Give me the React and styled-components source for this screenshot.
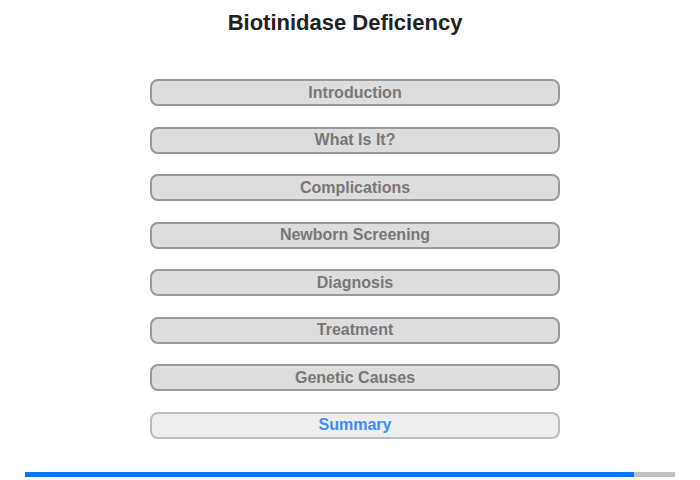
import React from 'react';
import styled, { createGlobalStyle } from 'styled-components';

const GlobalStyle = createGlobalStyle`
  html, body {
    margin: 0;
    padding: 0;
    background: #fff;
    font-family: "Liberation Sans", Arial, sans-serif;
  }
`;

const Page = styled.div`
  width: 700px;
  height: 480px;
  display: flex;
  flex-direction: column;
  align-items: center;
  box-sizing: border-box;
  padding-top: 10px;
`;

const Title = styled.h1`
  margin: 0 10px 0 0;
  font-size: 22px;
  font-weight: bold;
  color: #222;
  line-height: 26px;
`;

const Menu = styled.nav`
  margin-top: 43px;
  margin-left: 10px;
  display: flex;
  flex-direction: column;
  gap: 20.5px;
`;

const MenuButton = styled.button`
  width: 410px;
  height: 27px;
  box-sizing: border-box;
  border: 2px solid ${p => (p.$active ? '#bbb' : '#999')};
  border-radius: 8px;
  background: ${p => (p.$active ? '#eee' : '#ddd')};
  color: ${p => (p.$active ? '#3b8cff' : '#777')};
  font-family: "Liberation Sans", Arial, sans-serif;
  font-size: 16px;
  font-weight: bold;
  padding: 0;
  cursor: pointer;
`;

const Progress = styled.div`
  margin-top: auto;
  margin-bottom: 3px;
  width: 650px;
  height: 5px;
  background: #c0c0c0;
  display: flex;
`;

const ProgressFill = styled.div`
  height: 100%;
  background: #0077ff;
`;

const items = [
  'Introduction',
  'What Is It?',
  'Complications',
  'Newborn Screening',
  'Diagnosis',
  'Treatment',
  'Genetic Causes',
  'Summary',
];

export default function App() {
  return (
    <>
      <GlobalStyle />
      <Page>
        <Title>Biotinidase Deficiency</Title>
        <Menu>
          {items.map(item => (
            <MenuButton key={item} $active={item === 'Summary'}>
              {item}
            </MenuButton>
          ))}
        </Menu>
        <Progress>
          <ProgressFill style={{ width: `${(609 / 650) * 100}%` }} />
        </Progress>
      </Page>
    </>
  );
}
